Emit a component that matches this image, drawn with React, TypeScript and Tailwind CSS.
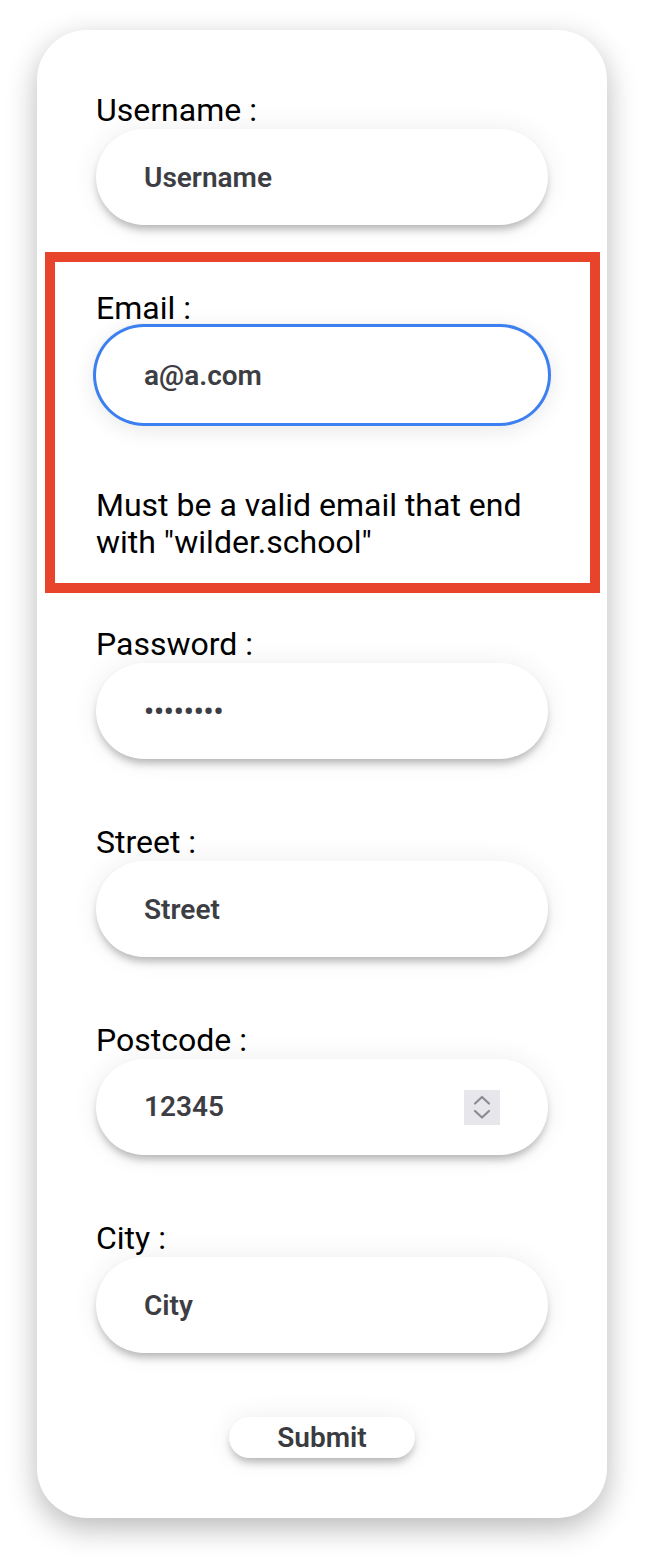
import React from 'react';

const inputShadow = 'shadow-[0_6px_8px_-2px_rgba(0,0,0,0.28),0_0_28px_rgba(0,0,0,0.07)]';

interface FieldProps {
  label: string;
  children: React.ReactNode;
}

const Field: React.FC<FieldProps> = ({ label, children }) => (
  <div className="flex flex-col">
    <label className="text-[32px] leading-[38px] text-black">{label}</label>
    {children}
  </div>
);

const pill = `h-[96px] w-full rounded-full bg-white px-[48px] text-[28px] font-semibold text-[#3d3e43] placeholder:text-[#3d3e43] outline-none ${inputShadow}`;

const Spinner = () => (
  <div className="flex h-[35px] w-[36px] shrink-0 items-center justify-center bg-[#e6e6eb]">
    <svg width="36" height="35" viewBox="0 0 36 35" fill="none">
      <path d="M11 13.5 L18 7 L25 13.5" stroke="#8b8b95" strokeWidth="2.2" strokeLinecap="round" strokeLinejoin="round" />
      <path d="M11 21 L18 27.5 L25 21" stroke="#8b8b95" strokeWidth="2.2" strokeLinecap="round" strokeLinejoin="round" />
    </svg>
  </div>
);

const App: React.FC = () => {
  return (
    <div className="min-h-[1565px] bg-white pt-[30px] font-['Roboto','Liberation_Sans',sans-serif]">
      <form
        onSubmit={(e) => e.preventDefault()}
        className="ml-[37px] flex w-[570px] flex-col gap-16 rounded-[50px] bg-white px-[59px] pb-[60px] pt-[61px] shadow-[0_10px_30px_rgba(0,0,0,0.28)]"
      >
        <Field label="Username :">
          <input type="text" placeholder="Username" className={pill} />
        </Field>

        <div className="relative flex flex-col gap-16">
          <div className="pointer-events-none absolute -bottom-[32px] -left-[51px] -right-[52px] -top-[37px] border-[10px] border-[#e8432b]" />
          <Field label="Email :">
            <input
              type="email"
              defaultValue="a@a.com"
              className="h-[96px] w-full rounded-full bg-white px-[48px] text-[28px] font-semibold text-[#3d3e43] outline-none shadow-[0_0_0_3px_#3b7ff0,0_0_0_4px_#f2f2f2,0_4px_24px_rgba(0,0,0,0.12)]"
            />
          </Field>
          <p className="text-[32px] leading-[37px] text-black">
            Must be a valid email that end with "wilder.school"
          </p>
        </div>

        <Field label="Password :">
          <input type="password" defaultValue="12345678" className={pill} />
        </Field>

        <Field label="Street :">
          <input type="text" placeholder="Street" className={pill} />
        </Field>

        <Field label="Postcode :">
          <div className={`flex h-[96px] w-full items-center rounded-full bg-white px-[48px] ${inputShadow}`}>
            <input
              type="text"
              inputMode="numeric"
              defaultValue="12345"
              className="min-w-0 flex-1 bg-transparent text-[28px] font-semibold text-[#3d3e43] outline-none"
            />
            <Spinner />
          </div>
        </Field>

        <Field label="City :">
          <input type="text" placeholder="City" className={pill} />
        </Field>

        <div className="flex justify-center">
          <button
            type="submit"
            className={`h-[41px] rounded-full bg-white px-[48px] text-[28px] font-semibold leading-none text-[#3a3b40] ${inputShadow}`}
          >
            Submit
          </button>
        </div>
      </form>
    </div>
  );
};

export default App;
